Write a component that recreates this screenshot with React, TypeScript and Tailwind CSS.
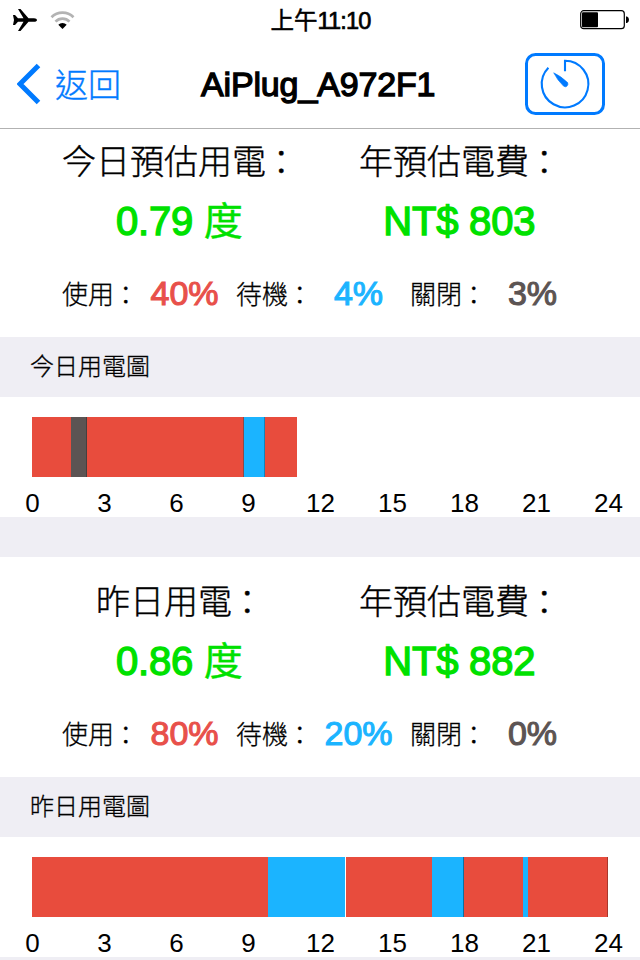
type Segment = { width: number; tone: string };

const todaySegments: Segment[] = [
  { width: 39, tone: 'bg-[#e84c3d]' },
  { width: 15, tone: 'bg-[#5c5453]' },
  { width: 1, tone: 'bg-[#463f3e]' },
  { width: 156, tone: 'bg-[#e84c3d]' },
  { width: 1, tone: 'bg-[#8a4a4a]' },
  { width: 20, tone: 'bg-[#1bb4ff]' },
  { width: 1, tone: 'bg-[#1483ba]' },
  { width: 32, tone: 'bg-[#e84c3d]' },
];

const yesterdaySegments: Segment[] = [
  { width: 236, tone: 'bg-[#e84c3d]' },
  { width: 77, tone: 'bg-[#1bb4ff]' },
  { width: 1, tone: 'bg-white' },
  { width: 86, tone: 'bg-[#e84c3d]' },
  { width: 31, tone: 'bg-[#1bb4ff]' },
  { width: 1, tone: 'bg-[#0f6f9f]' },
  { width: 59, tone: 'bg-[#e84c3d]' },
  { width: 5, tone: 'bg-[#1bb4ff]' },
  { width: 79, tone: 'bg-[#e84c3d]' },
  { width: 1, tone: 'bg-[#a8372c]' },
];

function StatusBar() {
  return (
    <div className="flex h-10 shrink-0 items-center justify-between pl-3 pr-[11px]">
      <div className="flex w-[150px] items-center gap-[13px]">
        <svg width="25" height="24" viewBox="0 0 25 24" fill="#000">
          <path d="M1 7h2l3 3.2h5.5L6 1h2.5l8 9.2H22c1.8 0 3 .9 3 1.8s-1.2 1.8-3 1.8h-5.5l-8 9.2H6l5.5-9.2H6L3 17H1l1-5z" />
        </svg>
        <svg width="25" height="20" viewBox="0 0 25 20" fill="none">
          <path d="M1.5 7.2a15.5 15.5 0 0 1 22 0" stroke="#b3b3b3" strokeWidth="2.7" />
          <path d="M5.5 11.6a9.8 9.8 0 0 1 14 0" stroke="#b3b3b3" strokeWidth="2.7" />
          <path d="M8.3 14.7a6 6 0 0 1 8.4 0L12.5 19z" fill="#000" />
        </svg>
      </div>
      <div className="flex items-center pt-[2px] text-[23.5px] leading-[38px]">
        <span className="[-webkit-text-stroke:0.5px]">上午</span>
        <span className="tracking-[-0.8px] [-webkit-text-stroke:0.7px]">11:10</span>
      </div>
      <div className="flex w-[150px] justify-end">
        <svg width="49" height="20" viewBox="0 0 49 20">
          <rect x="0.7" y="0.7" width="43.6" height="18" rx="3" fill="none" stroke="#000" strokeWidth="1.2" />
          <rect x="2" y="2.2" width="16" height="15" rx="1" fill="#000" />
          <path d="M46 6.5h1q2 .8 2 3.2t-2 3.2h-1z" fill="#000" />
        </svg>
      </div>
    </div>
  );
}

function NavBar() {
  return (
    <div className="flex h-[89px] shrink-0 items-center border-b border-[#b2b2b2] pl-[17px]">
      <svg width="24" height="42" viewBox="0 0 24 42" fill="none">
        <path d="M21.5 2.5L3 21l18.5 18.5" stroke="#007aff" strokeWidth="5" />
      </svg>
      <span className="ml-[14px] w-[146px] pt-[3px] text-[33px] font-light leading-[85px] text-[#007aff] [-webkit-text-stroke:0.4px]">
        返回
      </span>
      <h1 className="w-[324px] whitespace-nowrap text-[34px] font-normal leading-[88px] tracking-[-0.15px] [-webkit-text-stroke:1.3px]">
        AiPlug_A972F1
      </h1>
      <svg width="81" height="64" viewBox="0 0 81 64" fill="none" stroke="#007aff">
        <rect x="1.5" y="2.5" width="77" height="59" rx="9" strokeWidth="3" />
        <path d="M40 19.3V8.7A23.3 23.3 0 1 1 23.4 15.7" strokeWidth="2.1" />
        <path d="M28.7 20.8Q35 23.6 42.3 30.3a2.7 2.7 0 0 1-3.8 3.8Q32.1 27.8 28.7 20.8z" fill="#007aff" strokeWidth="0.6" />
      </svg>
    </div>
  );
}

/* Label ending in a full-width colon that sits at the middle of the line. */
function Label({ text }: { text: string }) {
  return (
    <>
      {text}
      <span className="inline-block -translate-x-[0.05em] translate-y-[0.03em]">：</span>
    </>
  );
}

function Figure({ label, value, unit }: { label: string; value: string; unit?: string }) {
  return (
    <div className="flex flex-col items-center whitespace-nowrap">
      <span className="h-[62px] pl-[2px] text-[34px] font-light leading-[66px] [-webkit-text-stroke:0.4px]">
        <Label text={label} />
      </span>
      <span className="whitespace-pre pr-[1.5px] text-[40px] leading-[60px] tracking-[-0.2px] text-[#00e100] [-webkit-text-stroke:1.4px]">
        {value}
        {unit && <span className="text-[39px] [-webkit-text-stroke:0.4px]"> {unit}</span>}
      </span>
    </div>
  );
}

function Share({ label, value, tone }: { label: string; value: string; tone: string }) {
  return (
    <div className="flex w-[174px] items-center pr-[7px]">
      <span className="w-[78px] whitespace-nowrap pt-[4px] text-[26px] font-light leading-[60px] [-webkit-text-stroke:0.3px]">
        <Label text={label} />
      </span>
      <span className={`flex-1 text-center text-[34px] leading-[60px] [-webkit-text-stroke:1.1px] ${tone}`}>{value}</span>
    </div>
  );
}

function Summary({ title, energy, cost, shares }: { title: string; energy: string; cost: string; shares: string[] }) {
  return (
    <section className="h-[208px] shrink-0">
      <div className="grid h-[134px] grid-cols-2 px-10">
        <Figure label={title} value={energy} unit="度" />
        <Figure label="年預估電費" value={cost} />
      </div>
      <div className="flex h-[60px] items-center pl-[62px]">
        <Share label="使用" value={shares[0]} tone="text-[#e8504a]" />
        <Share label="待機" value={shares[1]} tone="text-[#1bb4ff]" />
        <Share label="關閉" value={shares[2]} tone="text-[#5c5453]" />
      </div>
    </section>
  );
}

function Chart({ title, segments }: { title: string; segments: Segment[] }) {
  return (
    <section className="shrink-0">
      <h2 className="h-[60px] bg-[#efeef4] pl-[30px] text-[24px] font-light leading-[59px] [-webkit-text-stroke:0.3px]">
        {title}
      </h2>
      <div className="h-[120px] pt-5">
        <div className="flex h-[60px] pl-8">
          {segments.map((s, i) => (
            <div key={i} className={`h-full shrink-0 ${s.tone}`} style={{ width: s.width }} />
          ))}
        </div>
        <div className="-ml-[3.5px] flex h-10 text-[26px] leading-[53px]">
          {[0, 3, 6, 9, 12, 15, 18, 21, 24].map((hour) => (
            <span key={hour} className="w-[72px] shrink-0 text-center">
              {hour}
            </span>
          ))}
        </div>
      </div>
    </section>
  );
}

export default function App() {
  return (
    <div className="flex h-[960px] w-[640px] flex-col overflow-hidden bg-white font-['Liberation_Sans','Noto_Sans_CJK_TC',sans-serif] text-black">
      <StatusBar />
      <NavBar />
      <Summary title="今日預估用電" energy="0.79" cost="NT$ 803" shares={['40%', '4%', '3%']} />
      <Chart title="今日用電圖" segments={todaySegments} />
      <div className="h-10 shrink-0 bg-[#efeef4]" />
      <div className="h-3 shrink-0" />
      <Summary title="昨日用電" energy="0.86" cost="NT$ 882" shares={['80%', '20%', '0%']} />
      <Chart title="昨日用電圖" segments={yesterdaySegments} />
      <div className="h-10 shrink-0 bg-[#efeef4]" />
    </div>
  );
}
